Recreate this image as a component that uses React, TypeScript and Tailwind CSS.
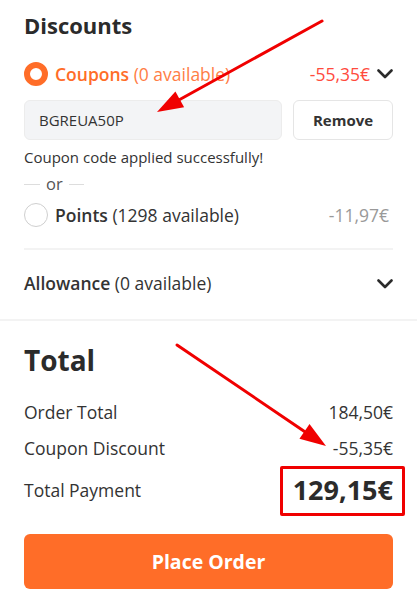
const font = { fontFamily: '"Open Sans", "Noto Sans", sans-serif' };

const Chevron = ({ className }: { className?: string }) => (
  <svg className={className} width={16} height={10} viewBox="0 0 16 10" fill="none">
    <polyline points="1.5,1.5 8,8 14.5,1.5" stroke="#2b2b2b" strokeWidth={2.6} strokeLinecap="round" strokeLinejoin="round" />
  </svg>
);

const Arrow = ({ x1, y1, x2, y2 }: { x1: number; y1: number; x2: number; y2: number }) => {
  const a = Math.atan2(y2 - y1, x2 - x1);
  const len = 26;
  const w = 9;
  const bx = x2 - Math.cos(a) * len;
  const by = y2 - Math.sin(a) * len;
  const p1 = `${bx + Math.sin(a) * w},${by - Math.cos(a) * w}`;
  const p2 = `${bx - Math.sin(a) * w},${by + Math.cos(a) * w}`;
  return (
    <g>
      <line x1={x1} y1={y1} x2={bx} y2={by} stroke="#f00000" strokeWidth={3} strokeLinecap="round" />
      <polygon points={`${x2},${y2} ${p1} ${p2}`} fill="#f00000" />
    </g>
  );
};

export default function App() {
  return (
    <div className="relative w-[417px] h-[602px] bg-white text-[#333] overflow-hidden" style={font}>
      <section className="px-6 pt-[9px]">
        <h2 className="text-[22px] font-bold leading-[32px] text-[#2b2b2b]">Discounts</h2>

        <div className="mt-[18px] flex items-center h-[30px]">
          <span className="w-6 h-6 rounded-full border-[6px] border-[#ff6d28] bg-white" />
          <span className="ml-[7px] text-[17.5px] text-[#ff6d28]">
            <span className="font-semibold">Coupons</span>{" "}
            <span className="text-[#ff7d45]">(0 available)</span>
          </span>
          <span className="ml-auto text-[17.5px] text-[#ff4b3d]">-55,35€</span>
          <Chevron className="ml-[7px]" />
        </div>

        <div className="mt-[11px] flex gap-[11px]">
          <div className="flex-1 h-10 rounded-md bg-[#f3f4f6] border border-[#ececec] flex items-center px-[14px] text-[15px] text-[#333]">
            BGREUA50P
          </div>
          <button className="w-[100px] h-10 rounded-md border border-[#e5e5e5] bg-white text-[15px] font-bold text-[#333]">
            Remove
          </button>
        </div>

        <p className="mt-[6px] text-[15px] leading-[22px] text-[#333]">Coupon code applied successfully!</p>

        <div className="mt-[6px] flex items-center gap-[6px] text-[16.5px] text-[#555] leading-[20px]">
          <span className="w-[16px] h-px bg-[#ddd]" />
          <span>or</span>
          <span className="w-[15px] h-px bg-[#ddd]" />
        </div>

        <div className="mt-[6px] flex items-center h-[30px]">
          <span className="w-6 h-6 rounded-full border border-[#cfcfcf] bg-white" />
          <span className="ml-[7px] text-[17.5px] text-[#333]">
            <span className="font-semibold">Points</span> (1298 available)
          </span>
          <span className="ml-auto mr-1 text-[17.5px] text-[#999]">-11,97€</span>
        </div>

        <div className="mt-[18px] h-[2px] bg-[#f3f3f3]" />

        <div className="flex items-center h-[67px]">
          <span className="text-[17.5px] text-[#333]">
            <span className="font-semibold">Allowance</span> (0 available)
          </span>
          <Chevron className="ml-auto" />
        </div>
      </section>

      <div className="mt-[2px] h-[2px] bg-[#f3f3f3]" />

      <section className="px-6 pt-[19px]">
        <h2 className="text-[28px] font-bold leading-[40px] text-[#2b2b2b]">Total</h2>
        <div className="mt-[20px] flex justify-between text-[17.5px] leading-[24px]">
          <span>Order Total</span>
          <span>184,50€</span>
        </div>
        <div className="mt-[12px] flex justify-between text-[17.5px] leading-[24px]">
          <span>Coupon Discount</span>
          <span>-55,35€</span>
        </div>
        <div className="mt-[6px] flex justify-between items-center h-[48px]">
          <span className="text-[17.5px]">Total Payment</span>
          <span className="text-[27px] font-bold text-[#2b2b2b]">129,15€</span>
        </div>
        <button className="mt-[20px] w-full h-[55px] rounded-md bg-[#ff6d28] text-white text-[19.5px] font-bold">
          Place Order
        </button>
      </section>

      <div className="absolute left-[280px] top-[466px] w-[125px] h-[50px] border-[3px] border-[#f00000] rounded-[2px]" />
      <svg className="absolute inset-0 pointer-events-none" width={417} height={602}>
        <Arrow x1={322} y1={21} x2={157} y2={112} />
        <Arrow x1={177} y1={345} x2={326} y2={446} />
      </svg>
    </div>
  );
}
